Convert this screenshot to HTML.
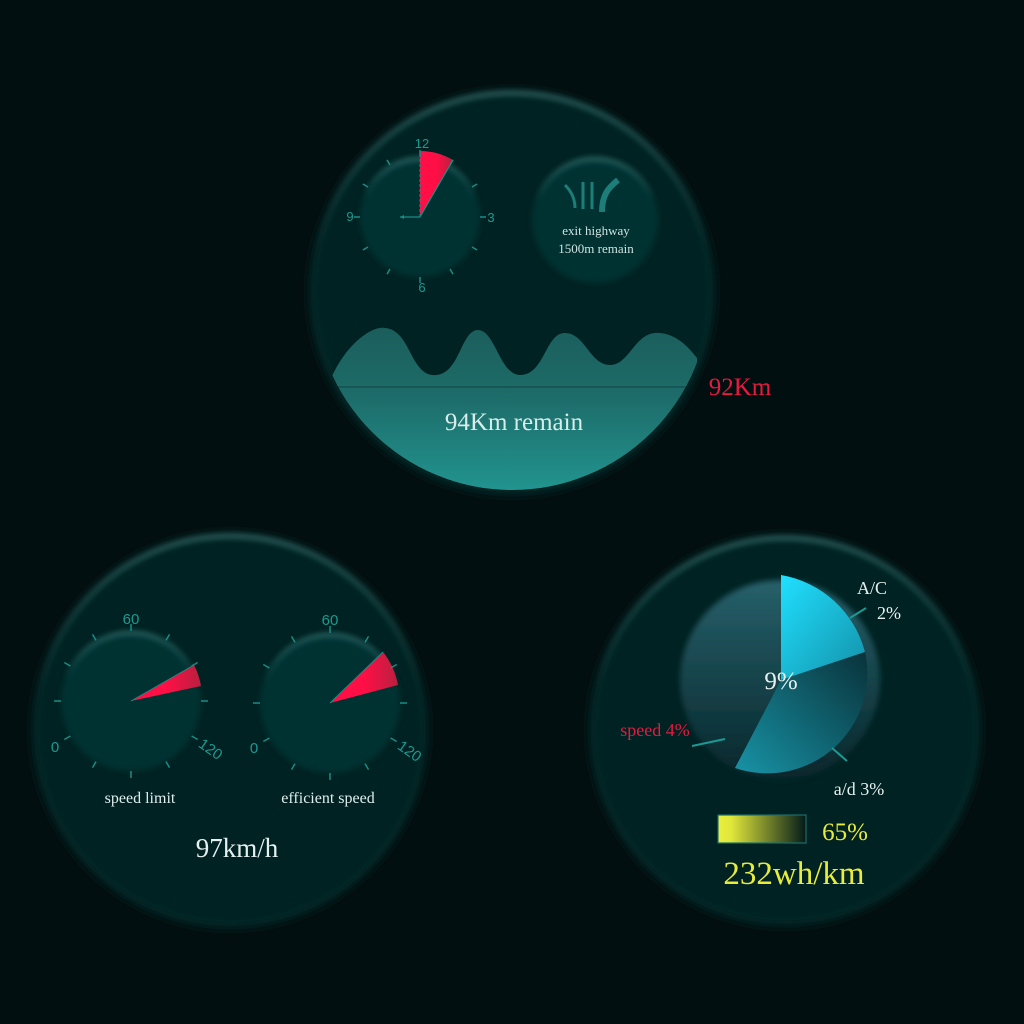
<!DOCTYPE html>
<html><head><style>
html,body{margin:0;padding:0;background:#020f10;width:1024px;height:1024px;overflow:hidden}
svg{display:block}
text{font-family:"Liberation Serif",serif}
.sans{font-family:"Liberation Sans",sans-serif}
</style></head><body>
<svg width="1024" height="1024" viewBox="0 0 1024 1024">
<defs>
<linearGradient id="rim" x1="0" y1="0" x2="0" y2="1">
<stop offset="0" stop-color="#4a8a88" stop-opacity="0.7"/><stop offset="0.4" stop-color="#2a6462" stop-opacity="0.15"/><stop offset="1" stop-color="#2a6462" stop-opacity="0.15"/>
</linearGradient>
<linearGradient id="srim" x1="0" y1="0" x2="0" y2="1">
<stop offset="0" stop-color="#4a8a88" stop-opacity="0.8"/><stop offset="0.35" stop-color="#4a8a88" stop-opacity="0"/>
</linearGradient>
<filter id="bl"><feGaussianBlur stdDeviation="3"/></filter>
<filter id="bl2"><feGaussianBlur stdDeviation="5"/></filter>
<linearGradient id="red" x1="0" y1="0" x2="1" y2="0"><stop offset="0.5" stop-color="#ff0f45"/><stop offset="1" stop-color="#b8203f"/></linearGradient>
<linearGradient id="sea" x1="0" y1="0" x2="0" y2="1"><stop offset="0" stop-color="#1b5e5c"/><stop offset="0.4" stop-color="#1d6c69"/><stop offset="1" stop-color="#229893"/></linearGradient>
<linearGradient id="cy1" x1="0" y1="0" x2="1" y2="1"><stop offset="0" stop-color="#20e0ff"/><stop offset="1" stop-color="#1390a8"/></linearGradient>
<linearGradient id="cy2" x1="0" y1="1" x2="1" y2="0"><stop offset="0" stop-color="#1aa6bb"/><stop offset="1" stop-color="#062e36"/></linearGradient>
<linearGradient id="pbg" x1="0" y1="0" x2="0" y2="1"><stop offset="0" stop-color="#27606a"/><stop offset="1" stop-color="#06262b"/></linearGradient>
<linearGradient id="bar" x1="0" y1="0" x2="1" y2="0"><stop offset="0" stop-color="#ebf03c"/><stop offset="0.15" stop-color="#e0e63a"/><stop offset="1" stop-color="#031a1a"/></linearGradient>
<clipPath id="topc"><circle cx="512" cy="292" r="198"/></clipPath>
</defs>

<!-- big circles -->
<g filter="url(#bl2)" fill="#042224">
<circle cx="512" cy="292" r="203"/>
<circle cx="230" cy="730" r="198"/>
<circle cx="785" cy="730" r="196"/>
</g>
<g filter="url(#bl)" fill="none" stroke="url(#rim)" stroke-width="4">
<circle cx="512" cy="292" r="199"/>
<circle cx="230" cy="730" r="194"/>
<circle cx="785" cy="730" r="192"/>
</g>

<!-- TOP -->
<g clip-path="url(#topc)">
<path d="M328 387 C340 350 370 325 385 328 C410 330 410 372 432 375 C460 378 460 330 478 330 C495 330 500 375 520 375 C545 375 545 333 565 333 C585 333 590 365 610 365 C630 365 635 330 660 333 C680 335 692 352 697 358 L697 500 L328 500 Z" fill="url(#sea)"/>
<line x1="328" y1="387" x2="697" y2="387" stroke="#0c4443" stroke-width="1"/>
</g>
<text x="514" y="430" font-size="25" fill="#d8ecea" text-anchor="middle">94Km remain</text>
<text x="740" y="395" font-size="25" fill="#e8193f" text-anchor="middle">92Km</text>

<!-- clock -->
<g filter="url(#bl)"><circle cx="420" cy="217" r="60" fill="#053232"/></g>
<circle cx="420" cy="217" r="58" fill="none" stroke="url(#srim)" stroke-width="3" filter="url(#bl)"/>
<path d="M420 217 L420 151 A66 66 0 0 1 453 160 Z" fill="url(#red)"/>
<line x1="420" y1="217" x2="420" y2="151" stroke="#1b8c86" stroke-width="1" stroke-dasharray="3 2"/>
<line x1="420" y1="217" x2="453" y2="160" stroke="#1b8c86" stroke-width="1.2"/>
<line x1="420" y1="217" x2="400" y2="217" stroke="#1b8c86" stroke-width="1.2"/>
<path d="M400 217 l4 -2 v4z" fill="#1b8c86"/>
<g stroke="#1b8c86" stroke-width="1.5" transform="translate(420,217)">
<line x1="0" y1="-60" x2="0" y2="-67"/>
<line x1="0" y1="-60" x2="0" y2="-66" transform="rotate(30)"/>
<line x1="0" y1="-60" x2="0" y2="-66" transform="rotate(60)"/>
<line x1="0" y1="-60" x2="0" y2="-66" transform="rotate(90)"/>
<line x1="0" y1="-60" x2="0" y2="-66" transform="rotate(120)"/>
<line x1="0" y1="-60" x2="0" y2="-66" transform="rotate(150)"/>
<line x1="0" y1="-60" x2="0" y2="-66" transform="rotate(180)"/>
<line x1="0" y1="-60" x2="0" y2="-66" transform="rotate(210)"/>
<line x1="0" y1="-60" x2="0" y2="-66" transform="rotate(240)"/>
<line x1="0" y1="-60" x2="0" y2="-66" transform="rotate(270)"/>
<line x1="0" y1="-60" x2="0" y2="-66" transform="rotate(300)"/>
<line x1="0" y1="-60" x2="0" y2="-66" transform="rotate(330)"/>
</g>
<g font-size="13" fill="#1b9a92" text-anchor="middle">
<text x="422" y="148" class="sans">12</text>
<text x="491" y="222" class="sans">3</text>
<text x="422" y="292" class="sans">6</text>
<text x="350" y="221" class="sans">9</text>
</g>

<!-- nav -->
<g filter="url(#bl)"><circle cx="595" cy="220" r="63" fill="#053232"/></g>
<circle cx="595" cy="220" r="61" fill="none" stroke="url(#srim)" stroke-width="3" filter="url(#bl)"/>
<g fill="none" stroke="#1d7d78" stroke-width="3">
<path d="M565 185 Q575 195 575 208"/>
<line x1="583" y1="182" x2="583" y2="209"/>
<line x1="592" y1="182" x2="592" y2="209"/>
</g>
<path d="M602 212 C602 195 608 188 618 180" fill="none" stroke="#1d7d78" stroke-width="6"/>
<text x="596" y="235" font-size="13" fill="#cfe2e0" text-anchor="middle">exit highway</text>
<text x="596" y="253" font-size="13" fill="#cfe2e0" text-anchor="middle">1500m remain</text>

<!-- BOTTOM LEFT gauges -->
<g filter="url(#bl)"><circle cx="131" cy="701" r="70" fill="#053232"/></g>
<circle cx="131" cy="701" r="68" fill="none" stroke="url(#srim)" stroke-width="3" filter="url(#bl)"/>
<g filter="url(#bl)"><circle cx="330" cy="703" r="70" fill="#053232"/></g>
<circle cx="330" cy="703" r="68" fill="none" stroke="url(#srim)" stroke-width="3" filter="url(#bl)"/>

<path d="M131 701 L194 665 A72 72 0 0 1 201 686 Z" fill="url(#red)"/>
<path d="M330 703 L383 652 A76 76 0 0 1 398 685 Z" fill="url(#red)"/>
<line x1="131" y1="701" x2="194" y2="665" stroke="#1b8c86" stroke-width="1"/>
<line x1="330" y1="703" x2="383" y2="652" stroke="#1b8c86" stroke-width="1"/>

<g stroke="#1b8c86" stroke-width="1.5">
<g transform="translate(131,701)">
<line x1="0" y1="-70" x2="0" y2="-77"/><line x1="0" y1="-70" x2="0" y2="-77" transform="rotate(30)"/><line x1="0" y1="-70" x2="0" y2="-77" transform="rotate(60)"/><line x1="0" y1="-70" x2="0" y2="-77" transform="rotate(90)"/><line x1="0" y1="-70" x2="0" y2="-77" transform="rotate(120)"/><line x1="0" y1="-70" x2="0" y2="-77" transform="rotate(150)"/><line x1="0" y1="-70" x2="0" y2="-77" transform="rotate(180)"/><line x1="0" y1="-70" x2="0" y2="-77" transform="rotate(210)"/><line x1="0" y1="-70" x2="0" y2="-77" transform="rotate(240)"/><line x1="0" y1="-70" x2="0" y2="-77" transform="rotate(270)"/><line x1="0" y1="-70" x2="0" y2="-77" transform="rotate(300)"/><line x1="0" y1="-70" x2="0" y2="-77" transform="rotate(330)"/>
</g>
<g transform="translate(330,703)">
<line x1="0" y1="-70" x2="0" y2="-77"/><line x1="0" y1="-70" x2="0" y2="-77" transform="rotate(30)"/><line x1="0" y1="-70" x2="0" y2="-77" transform="rotate(60)"/><line x1="0" y1="-70" x2="0" y2="-77" transform="rotate(90)"/><line x1="0" y1="-70" x2="0" y2="-77" transform="rotate(120)"/><line x1="0" y1="-70" x2="0" y2="-77" transform="rotate(150)"/><line x1="0" y1="-70" x2="0" y2="-77" transform="rotate(180)"/><line x1="0" y1="-70" x2="0" y2="-77" transform="rotate(210)"/><line x1="0" y1="-70" x2="0" y2="-77" transform="rotate(240)"/><line x1="0" y1="-70" x2="0" y2="-77" transform="rotate(270)"/><line x1="0" y1="-70" x2="0" y2="-77" transform="rotate(300)"/><line x1="0" y1="-70" x2="0" y2="-77" transform="rotate(330)"/>
</g>
</g>
<g fill="#1b9a92" font-size="15">
<text x="131" y="624" text-anchor="middle" class="sans">60</text>
<text x="55" y="752" text-anchor="middle" class="sans">0</text>
<text x="210" y="754" text-anchor="middle" class="sans" transform="rotate(35 210 750)">120</text>
<text x="330" y="625" text-anchor="middle" class="sans">60</text>
<text x="254" y="753" text-anchor="middle" class="sans">0</text>
<text x="409" y="756" text-anchor="middle" class="sans" transform="rotate(35 409 752)">120</text>
</g>
<text x="140" y="803" font-size="16" fill="#dfeeed" text-anchor="middle">speed limit</text>
<text x="328" y="803" font-size="16" fill="#dfeeed" text-anchor="middle">efficient speed</text>
<text x="237" y="857" font-size="27" fill="#e6f0ef" text-anchor="middle">97km/h</text>

<!-- BOTTOM RIGHT pie -->
<g filter="url(#bl)"><circle cx="780" cy="680" r="100" fill="url(#pbg)"/></g>
<path d="M781 680 L781 575 A105 105 0 0 1 865 652 Z" fill="url(#cy1)"/>
<path d="M781 680 L865 652 A100 100 0 0 1 735 768 Z" fill="url(#cy2)" opacity="0.85"/>
<g stroke="#1a9a94" stroke-width="2">
<line x1="850" y1="618" x2="866" y2="608"/>
<line x1="832" y1="748" x2="847" y2="761"/>
<line x1="692" y1="746" x2="725" y2="739"/>
</g>
<text x="781" y="689" font-size="25" fill="#e6f0ef" text-anchor="middle">9%</text>
<text x="872" y="594" font-size="18" fill="#e6f0ef" text-anchor="middle">A/C</text>
<text x="889" y="619" font-size="18" fill="#e6f0ef" text-anchor="middle">2%</text>
<text x="655" y="736" font-size="18" fill="#e8193f" text-anchor="middle">speed 4%</text>
<text x="859" y="795" font-size="18" fill="#e6f0ef" text-anchor="middle">a/d 3%</text>
<rect x="718" y="815" width="88" height="28" fill="url(#bar)" stroke="#1a6d6a" stroke-width="1.2"/>
<text x="845" y="840" font-size="25" fill="#e8ec3a" text-anchor="middle">65%</text>
<text x="794" y="884" font-size="33" fill="#e8ec3a" text-anchor="middle">232wh/km</text>
</svg>
</body></html>
